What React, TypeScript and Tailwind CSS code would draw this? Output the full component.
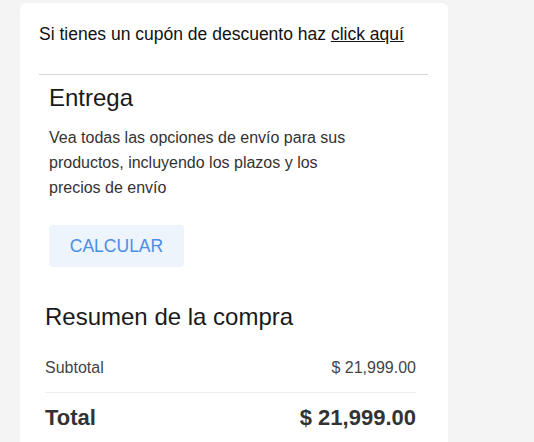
export default function App() {
  return (
    <div className="min-h-[442px] bg-[#f4f4f4] pl-[20px] pt-[3px]" style={{ fontFamily: '"Liberation Sans", Arial, sans-serif' }}>
      <div className="w-[428px] min-h-[439px] rounded-t-[6px] bg-white pl-[19px] pr-[20px] pt-[21px]">
        <p className="text-[17.5px] leading-[20px] text-[#111]">
          Si tienes un cupón de descuento haz <a className="underline cursor-pointer">click aquí</a>
        </p>
        <div className="mt-[30px] h-px bg-[#d6d6d6]" />
        <div className="pl-[10px]">
          <h2 className="mt-[9px] text-[24px] leading-[28px] text-[#1a1a1a]">Entrega</h2>
          <p className="mt-[13px] w-[310px] text-[16px] leading-[25px] text-[#333]">
            Vea todas las opciones de envío para sus productos, incluyendo los plazos y los precios de envío
          </p>
          <button className="mt-[25px] flex h-[42px] w-[135px] items-center justify-center rounded-[4px] bg-[#edf4fb] text-[17.5px] text-[#4a8ee6]">
            CALCULAR
          </button>
        </div>
        <div className="pl-[6px] pr-[12px]">
          <h2 className="mt-[36px] text-[24px] leading-[28px] text-[#1a1a1a]">Resumen de la compra</h2>
          <div className="mt-[28px] flex justify-between border-b border-[#eeeeee] pb-[15px] text-[16px] leading-[18px] text-[#444]">
            <span>Subtotal</span>
            <span>$ 21,999.00</span>
          </div>
          <div className="mt-[12px] flex justify-between text-[22px] font-bold leading-[26px] text-[#333]">
            <span>Total</span>
            <span>$ 21,999.00</span>
          </div>
        </div>
      </div>
    </div>
  );
}
